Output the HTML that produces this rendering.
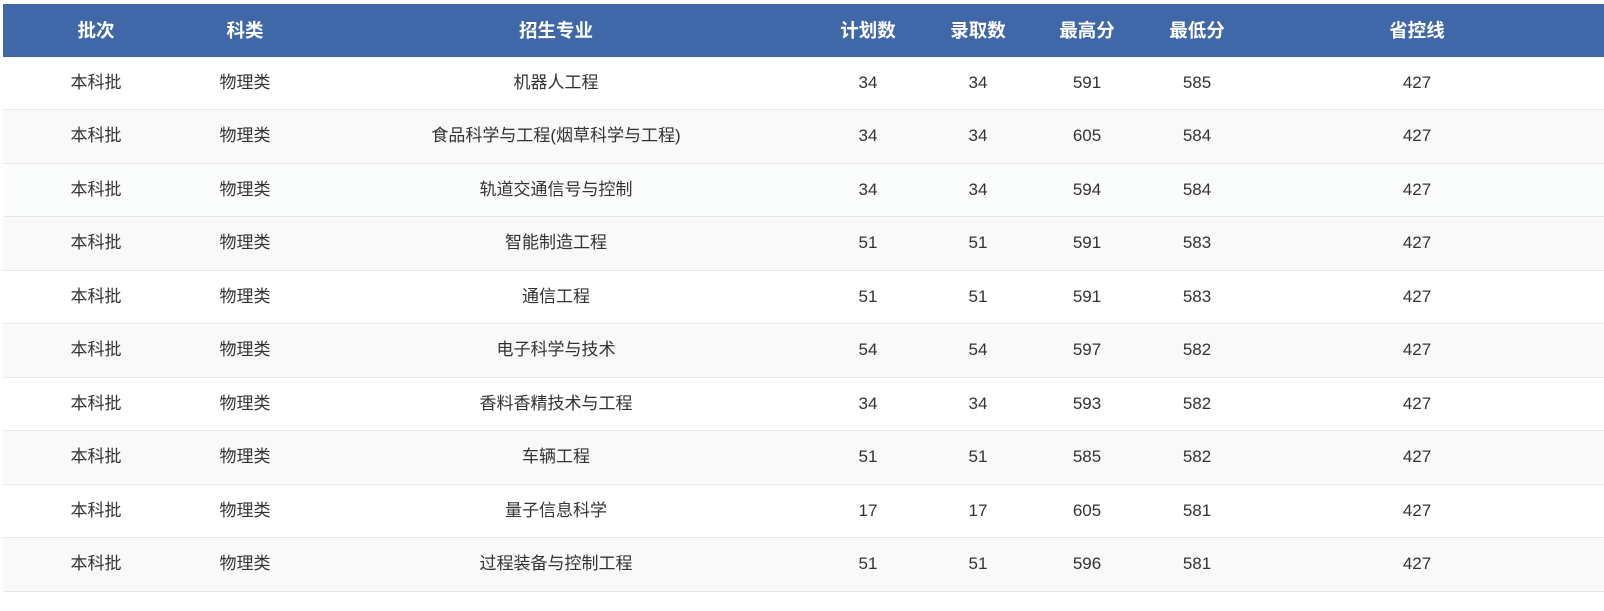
<!DOCTYPE html>
<html><head><meta charset="utf-8"><style>
body{margin:0;width:1604px;height:611px;background:#fff;overflow:hidden;font-family:"Liberation Sans","Noto Sans CJK SC",sans-serif;}
.hd{position:absolute;left:3px;top:4px;width:1601px;height:53px;background:#4067a8;}
.row{position:absolute;left:3px;width:1601px;height:53px;border-bottom:1px solid #e8e8ec;box-sizing:border-box;}
.c{position:absolute;top:0;width:300px;margin-left:-150px;text-align:center;line-height:52px;font-size:17px;color:#333;}
.hd .c{color:#fff;font-weight:bold;line-height:53px;font-size:18.5px;}
</style></head><body>
<div class="hd">
<span class="c" style="left:93px">批次</span><span class="c" style="left:242px">科类</span><span class="c" style="left:553px">招生专业</span><span class="c" style="left:865px">计划数</span><span class="c" style="left:975px">录取数</span><span class="c" style="left:1084px">最高分</span><span class="c" style="left:1194px">最低分</span><span class="c" style="left:1414px">省控线</span>
</div>
<div id="rows"></div>
<script>
var d=[["机器人工程",34,34,591,585],["食品科学与工程(烟草科学与工程)",34,34,605,584],["轨道交通信号与控制",34,34,594,584],["智能制造工程",51,51,591,583],["通信工程",51,51,591,583],["电子科学与技术",54,54,597,582],["香料香精技术与工程",34,34,593,582],["车辆工程",51,51,585,582],["量子信息科学",17,17,605,581],["过程装备与控制工程",51,51,596,581]];
var tops=[57,110,164,217,271,324,378,431,485,538],h="";
d.forEach(function(r,i){var bg=i%2?"#f9f9f9":"#fff";if(i==2)bg="#fbfdfc";
h+='<div class="row" style="top:'+tops[i]+'px;height:'+((tops[i+1]||592)-tops[i])+'px;background:'+bg+'"><span class="c" style="left:93px">本科批</span><span class="c" style="left:242px">物理类</span><span class="c" style="left:553px">'+r[0]+'</span><span class="c" style="left:865px">'+r[1]+'</span><span class="c" style="left:975px">'+r[2]+'</span><span class="c" style="left:1084px">'+r[3]+'</span><span class="c" style="left:1194px">'+r[4]+'</span><span class="c" style="left:1414px">427</span></div>';});
document.getElementById("rows").innerHTML=h;
</script>
</body></html>
